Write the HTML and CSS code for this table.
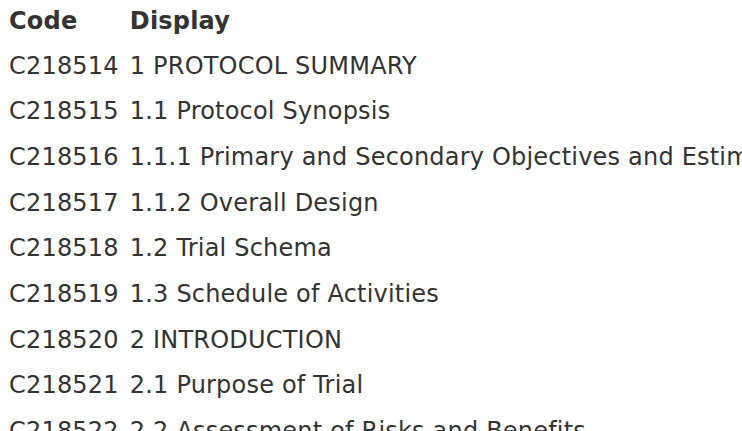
FILE: index.html
```html
<!DOCTYPE html>
<html lang="en">
<head>
    <meta charset="UTF-8">
    <meta name="viewport" content="width=device-width, initial-scale=1.0">
    <title>Sections</title>
    <link rel="stylesheet" href="styles.css">
</head>
<body>
    <table class="codes">
        <thead>
            <tr>
                <th>Code</th>
                <th>Display</th>
            </tr>
        </thead>
        <tbody>
            <tr><td>C218514</td><td>1 PROTOCOL SUMMARY</td></tr>
            <tr><td>C218515</td><td>1.1 Protocol Synopsis</td></tr>
            <tr><td>C218516</td><td>1.1.1 Primary and Secondary Objectives and Estimands</td></tr>
            <tr><td>C218517</td><td>1.1.2 Overall Design</td></tr>
            <tr><td>C218518</td><td>1.2 Trial Schema</td></tr>
            <tr><td>C218519</td><td>1.3 Schedule of Activities</td></tr>
            <tr><td>C218520</td><td>2 INTRODUCTION</td></tr>
            <tr><td>C218521</td><td>2.1 Purpose of Trial</td></tr>
            <tr><td>C218522</td><td>2.2 Assessment of Risks and Benefits</td></tr>
            <tr><td>C218523</td><td>2.2.1 Risk Summary and Evaluation</td></tr>
        </tbody>
    </table>
</body>
</html>
```

FILE: styles.css
```css
html, body {
    margin: 0;
    overflow: hidden;
}
body {
    font-family: "DejaVu Sans", Verdana, sans-serif;
    font-size: 24px;
    letter-spacing: 0.2px;
    color: #333;
    background: #fff;
}
.codes {
    border-collapse: collapse;
    margin-left: 9px;
    white-space: nowrap;
}
.codes th, .codes td {
    padding: 0 11px 0 0;
    text-align: left;
    vertical-align: middle;
}
.codes th {
    font-weight: bold;
    line-height: 43.5px;
}
.codes td {
    line-height: 45.7px;
}
```
